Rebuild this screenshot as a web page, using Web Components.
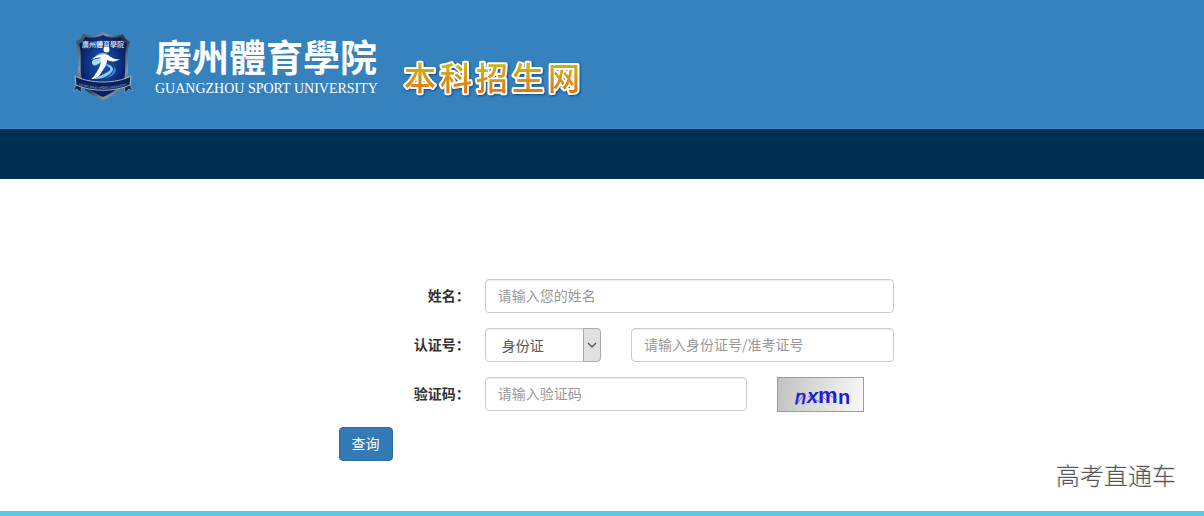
<!DOCTYPE html>
<html lang="zh-CN">
<head>
<meta charset="utf-8">
<meta name="viewport" content="width=device-width, initial-scale=1">
<title>广州体育学院本科招生网</title>
<style>
  html, body { height: 100%; }
  body {
    margin: 0;
    background: #fff;
    color: #333;
    font: 14px/20px "Noto Sans CJK SC", sans-serif;
  }
</style>
</head>
<body>
<admission-page>
  <site-header slot="header"></site-header>
  <query-form></query-form>
  <page-mark slot="mark">高考直通车</page-mark>
</admission-page>

<script>
// Shared helper: attach an open root and fill it.
function render(el, html) {
  el.attachShadow({ mode: "open" }).innerHTML = html;
}

// <admission-page>: header on top, form in the middle, cyan line at the bottom.
class AdmissionPage extends HTMLElement {
  constructor() {
    super();
    render(this, `
      <style>
        :host {
          display: flex;
          flex-direction: column;
          box-sizing: border-box;
          min-height: 100%;
        }
        main { flex: 1; padding-top: 100px; }
        footer { border-bottom: 5px solid #54cbe2; }
        .mark { display: flex; justify-content: flex-end; padding: 0 28px 22px; }
      </style>
      <slot name="header"></slot>
      <main><slot></slot></main>
      <footer><div class="mark"><slot name="mark"></slot></div></footer>
    `);
  }
}

// <school-crest>: the shield with the runner and the ribbon.
class SchoolCrest extends HTMLElement {
  constructor() {
    super();
    render(this, `
      <style>
        :host { display: block; }
        svg { display: block; }
      </style>
      <svg width="60" height="70" viewBox="0 0 60 70" role="img" aria-label="校徽">
        <defs>
          <linearGradient id="rim" x1="0" y1="0" x2="1" y2="1">
            <stop offset="0" stop-color="#26323f"/>
            <stop offset=".3" stop-color="#8796a5"/>
            <stop offset=".5" stop-color="#1c2b3e"/>
            <stop offset=".75" stop-color="#8496a6"/>
            <stop offset="1" stop-color="#26384c"/>
          </linearGradient>
          <radialGradient id="field" cx=".5" cy=".45" r=".55">
            <stop offset="0" stop-color="#1c58b4"/>
            <stop offset=".6" stop-color="#0d3383"/>
            <stop offset="1" stop-color="#061a55"/>
          </radialGradient>
        </defs>
        <path d="M30 1C24 5 17 5 10 3C9 6 7 9 3 11C7 21 5 32 5 43C6 56 16 64 30 69C44 64 54 56 55 43C55 32 53 21 57 11C53 9 51 6 50 3C43 5 36 5 30 1Z" fill="url(#rim)"/>
        <path d="M30 4C24 7 18 7 12 6C11 9 9 11 6 13C9 22 7 32 8 43C9 54 18 61 30 66C42 61 51 54 52 43C53 32 51 22 54 13C51 11 49 9 48 6C42 7 36 7 30 4Z" fill="url(#field)"/>
        <text x="30" y="16" text-anchor="middle" font-size="7" font-weight="500" fill="#e7eef8" font-family="Noto Sans CJK TC, sans-serif">廣州體育學院</text>
        <path d="M20 29C23 21 34 19 36 26C33 23 25 25 20 29Z" fill="#56b5ec"/>
        <path d="M18 35C25 35 29 31 31 26C24 28 18 28 19 32C19 34 22 35 25 34" fill="#a7d8f5"/>
        <circle cx="33.500" cy="18.500" r="3" fill="#fff"/>
        <path d="M18 29C23 24 30 22 35 24C39 27 42 29 47 28C43 31 38 31 34 29C34 35 30 38 28 42C26 46 22 48 18 48C22 45 22 43 25 39C27 36 28 32 28 27C25 26 21 27 18 29Z" fill="#fff"/>
        <path d="M31 33C38 33 43 37 38 42C33 47 26 48 21 48C27 44 35 42 37 39C38 36 34 35 31 33Z" fill="#86c8ef"/>
        <path d="M41 36C46 40 40 46 31 48C37 45 41 42 41 36Z" fill="#2d8fdf"/>
        <path d="M2 46L9 49L8 62L4 58L0 60L3 54ZM58 46L51 49L52 62L56 58L60 60L57 54Z" fill="#102752" stroke="#9aabba" stroke-width=".7"/>
        <path d="M2 45C17 53 43 53 58 45L57 54C42 61 18 61 3 54Z" fill="#0b2358" stroke="#a5b4c2" stroke-width="1"/>
        <path id="ribbon" d="M6 54C19 59 41 59 54 54" fill="none"/>
        <text font-size="3" fill="#c1d1e2" font-family="Liberation Serif, serif"><textPath href="#ribbon">GUANGZHOU SPORT UNIVERSITY</textPath></text>
      </svg>
    `);
  }
}

// <site-title>: outlined orange lettering next to the school name.
class SiteTitle extends HTMLElement {
  constructor() {
    super();
    render(this, `
      <style>
        :host { display: block; }
        svg { display: block; overflow: visible; filter: drop-shadow(1px 1px 1px #1b4a77); }
        text {
          font: 500 32px "Noto Sans CJK SC", sans-serif;
          fill: url(#gold);
          stroke: #fff;
          stroke-width: 4px;
          stroke-linejoin: round;
          paint-order: stroke;
        }
      </style>
      <svg width="176" height="36" viewBox="0 0 176 36">
        <defs>
          <linearGradient id="gold" x1="0" y1="0" x2="0" y2="36" gradientUnits="userSpaceOnUse">
            <stop offset=".1" stop-color="#cdb513"/>
            <stop offset=".9" stop-color="#e8700f"/>
          </linearGradient>
        </defs>
        <text x="0 36 72 108 144" y="29">本科招生网</text>
      </svg>
    `);
  }
}

// <site-header>: blue banner with a dark navigation strip under it.
class SiteHeader extends HTMLElement {
  constructor() {
    super();
    render(this, `
      <style>
        :host { display: block; }
        .banner {
          display: flex;
          align-items: flex-start;
          box-sizing: border-box;
          min-height: 129px;
          padding: 31px 16px 0 73px;
          background: #3682be;
          border-bottom: 1px solid #3b8bc6;
        }
        .school { margin: 6px 26px 0 22px; color: #fff; white-space: nowrap; }
        h1 {
          margin: 0;
          padding-bottom: 6px;
          font: 700 37px/38px "Noto Sans CJK TC", sans-serif;
        }
        p { margin: 0; font: 14px/16px "Liberation Serif", serif; }
        site-title { margin-top: 30px; }
        nav { height: 50px; background: #022f51; }
      </style>
      <div class="banner">
        <school-crest></school-crest>
        <div class="school">
          <h1>廣州體育學院</h1>
          <p>GUANGZHOU SPORT UNIVERSITY</p>
        </div>
        <site-title></site-title>
      </div>
      <nav></nav>
    `);
  }
}

// <captcha-image>: skewed letters over a grey gradient.
class CaptchaImage extends HTMLElement {
  constructor() {
    super();
    render(this, `
      <style>
        :host { display: block; }
        svg {
          display: block;
          box-sizing: border-box;
          border: 1px solid #7fb377;
          background: linear-gradient(100deg, #c2c2c2, #f8f8f8);
        }
        text { font: 700 20px "Liberation Sans", sans-serif; fill: #211bd8; }
        .thin { font-style: italic; font-weight: 400; stroke: #211bd8; stroke-width: .5px; }
      </style>
      <svg width="87" height="35" viewBox="0 0 85 33" role="img" aria-label="验证码">
        <text y="26"><tspan x="17" class="thin">n</tspan><tspan x="29" y="25" font-style="italic">x</tspan><tspan x="40" y="25" font-size="22">m</tspan><tspan x="60" y="26">n</tspan></text>
        <path d="M18 27L27 15M30 18L42 24M43 17L50 24M47 14L59 22" fill="none" stroke="#4a46d0" stroke-width=".7"/>
      </svg>
    `);
  }
}

// <query-form>: three labelled rows on a 12 column grid and the submit button.
class QueryForm extends HTMLElement {
  constructor() {
    super();
    render(this, `
      <style>
        :host {
          display: block;
          box-sizing: border-box;
          max-width: 1170px;
          margin: 0 auto;
        }
        form {
          display: flex;
          flex-direction: column;
          gap: 15px;
          width: 50%;
          margin-left: calc(25% + 14px);
        }
        .row { display: flex; }
        label { flex: 0 0 25%; font-weight: 700; line-height: 32px; text-align: right; }
        .cell { box-sizing: border-box; padding: 0 15px; }
        .quarter { flex: 0 0 25%; }
        .half { flex: 0 0 50%; }
        .wide { flex: 0 0 75%; }
        input, select {
          box-sizing: border-box;
          width: 100%;
          height: 34px;
          margin: 0;
          padding: 5px 12px 7px;
          border: 1px solid #ccc;
          border-radius: 4px;
          background: #fff;
          color: #555;
          font: inherit;
          box-shadow: inset 0 1px 1px rgba(0, 0, 0, .075);
        }
        input::placeholder { color: #999; opacity: 1; }
        .select { display: grid; }
        .select > * { grid-area: 1 / 1; }
        select { appearance: none; padding: 6px 20px 6px 16px; }
        .arrow {
          display: block;
          justify-self: end;
          box-sizing: border-box;
          width: 18px;
          height: 34px;
          border: 1px solid #acacac;
          border-radius: 0 4px 4px 0;
          background: #e1e1e1;
          pointer-events: none;
        }
        .actions { padding: 0 15px; }
        button {
          display: block;
          height: 34px;
          padding: 5px 12px 7px;
          border: 1px solid #2e6da4;
          border-radius: 4px;
          background: #337ab7;
          color: #fff;
          font: inherit;
        }
      </style>
      <form>
        <div class="row">
          <label for="name">姓名：</label>
          <div class="cell wide"><input id="name" type="text" placeholder="请输入您的姓名"></div>
        </div>
        <div class="row">
          <label for="kind">认证号：</label>
          <div class="cell quarter">
            <div class="select">
              <select id="kind">
                <option>身份证</option>
                <option>准考证</option>
              </select>
              <svg class="arrow" viewBox="0 0 16 32" aria-hidden="true">
                <path d="M4 14L8 18L12 14" fill="none" stroke="#444" stroke-width="1.200"/>
              </svg>
            </div>
          </div>
          <div class="cell half"><input type="text" aria-label="认证号" placeholder="请输入身份证号/准考证号"></div>
        </div>
        <div class="row">
          <label for="code">验证码：</label>
          <div class="cell half"><input id="code" type="text" placeholder="请输入验证码"></div>
          <div class="cell quarter"><captcha-image></captcha-image></div>
        </div>
        <div class="actions"><button type="button">查询</button></div>
      </form>
    `);
  }
}

// <page-mark>: embossed grey lettering in the lower right corner.
class PageMark extends HTMLElement {
  constructor() {
    super();
    render(this, `
      <style>
        :host {
          display: block;
          color: #555;
          font-size: 24px;
          font-weight: 300;
          line-height: 28px;
          text-shadow: -1px -1px 0 #ddd;
        }
      </style>
      <slot></slot>
    `);
  }
}

customElements.define("admission-page", AdmissionPage);
customElements.define("school-crest", SchoolCrest);
customElements.define("site-title", SiteTitle);
customElements.define("site-header", SiteHeader);
customElements.define("captcha-image", CaptchaImage);
customElements.define("query-form", QueryForm);
customElements.define("page-mark", PageMark);
</script>
</body>
</html>
